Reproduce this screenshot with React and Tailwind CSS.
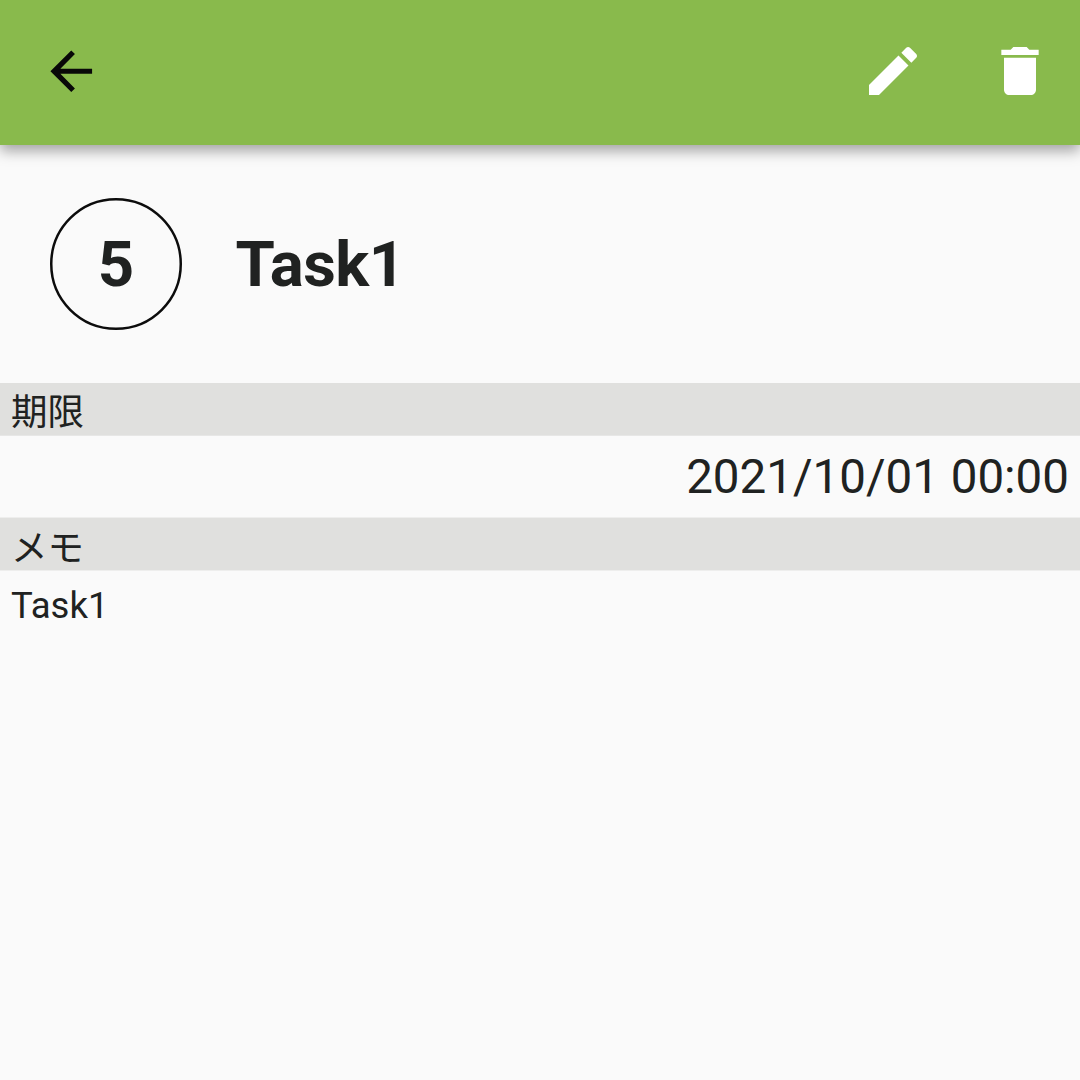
const sans = "font-['Roboto','Noto_Sans_CJK_JP',sans-serif]";

function Icon({ d, className }) {
  return (
    <svg viewBox="0 0 24 24" fill="currentColor" className={className}>
      <path d={d} />
    </svg>
  );
}

function SectionHeader({ children, className }) {
  return (
    <h2 className={`flex items-center border-b bg-[#e0e0de] pl-[11px] text-[36.5px] font-normal leading-none ${className}`}>
      {children}
    </h2>
  );
}

export default function App() {
  return (
    <div className={`flex h-[1080px] w-[1080px] flex-col overflow-hidden bg-[#fafafa] text-[#202221] ${sans}`}>
      <header className="z-10 flex h-[145px] shrink-0 items-center bg-[#89ba4c] pb-[3px] pl-[40px] pr-[28px] shadow-[0_6px_13px_rgba(0,0,0,0.35)]">
        <button aria-label="Back" className="text-[#080808]">
          <Icon className="size-[62.5px]" d="M20 11H7.83l5.59-5.59L12 4l-8 8 8 8 1.41-1.41L7.83 13H20v-2z" />
        </button>
        <div className="ml-auto flex gap-[63px] text-white">
          <button aria-label="Edit">
            <Icon className="size-[64px]" d="M3 17.25V21h3.75L17.81 9.94l-3.75-3.75L3 17.25zM20.71 7.04c.39-.39.39-1.02 0-1.41l-2.34-2.34c-.39-.39-1.02-.39-1.41 0l-1.83 1.83 3.75 3.75 1.83-1.83z" />
          </button>
          <button aria-label="Delete">
            <Icon className="size-[64px]" d="M6 19c0 1.1.9 2 2 2h8c1.1 0 2-.9 2-2V7H6v12zM19 4h-3.5l-1-1h-5l-1 1H5v2h14V4z" />
          </button>
        </div>
      </header>
      <main className="flex flex-col">
        <div className="flex h-[238px] items-center gap-[53.5px] pl-[50px] text-[63.5px] font-bold leading-[64px]">
          <div className="relative flex size-[132px] items-center justify-center">
            <svg viewBox="0 0 132 132" className="absolute inset-0" fill="none" stroke="#0c0c0c" strokeWidth="2.5">
              <circle cx="66" cy="66" r="64.75" />
            </svg>
            <span className="pt-[2px]">5</span>
          </div>
          <h1 className="pt-[2px] tracking-[-0.5px]">Task1</h1>
        </div>
        <SectionHeader className="h-[53px] border-[#e7e7e6] pt-[9px]">期限</SectionHeader>
        <p className="flex h-[81px] items-center justify-end pr-[11px] pt-[3px] text-[47.5px] leading-none">2021/10/01 00:00</p>
        <SectionHeader className="h-[54px] border-t border-[#eeeeed] pt-[10px]">メモ</SectionHeader>
        <p className="flex h-[69px] items-center pl-[11px] pt-px text-[36.5px] leading-none">Task1</p>
      </main>
    </div>
  );
}
